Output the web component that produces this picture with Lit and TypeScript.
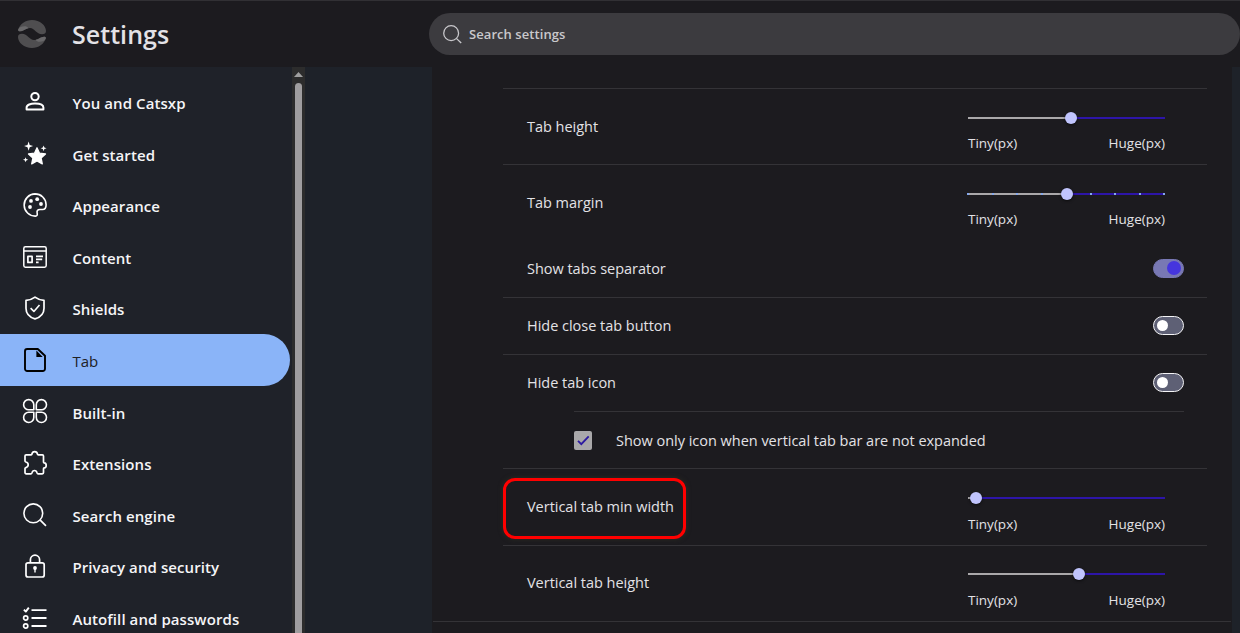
import { LitElement, html, css, svg, nothing } from "lit";
import { customElement, property } from "lit/decorators.js";
import { classMap } from "lit/directives/class-map.js";
import { styleMap } from "lit/directives/style-map.js";

const icons: Record<string, unknown> = {
  person: svg`<circle cx="12" cy="6.600" r="3.700" stroke-width="2"/><path d="M3.600 19.400v-1.900c0-2.700 4-4 8.400-4s8.400 1.300 8.400 4v1.900z" stroke-width="2"/>`,
  stars: svg`<path class="fill" d="M14 6.800l2.500 5.400 6 .7-4.400 4 1.200 6-5.300-3-5.300 3 1.200-6-4.400-4 6-.7z" stroke-width="1.300"/><path class="solid" d="M5.600 .6l1.100 3.300 3.400 1.200-3.400 1.200-1.100 3.400-1.100-3.400-3.400-1.200 3.400-1.200zM20.600 4.400l.8 2.100 2.200.8-2.200.8-.8 2.200-.8-2.200-2.200-.8 2.200-.8zM2.600 16.200l.7 1.800 1.900.7-1.900.7-.7 1.900-.7-1.900-1.900-.7 1.900-.7z"/>`,
  palette: svg`<path d="M12 .9A11.100 11.100 0 1 0 12.500 23.100c1.500 0 2-1.100 1.700-2.600-.6-2.500.3-4 2.800-4h2.500c2.300 0 3.600-1.700 3.600-4.700C23 5.500 18 .9 12 .9z" stroke-width="1.600"/><g class="solid"><circle cx="8" cy="7.900" r="1.900"/><circle cx="14.200" cy="6.200" r="1.900"/><circle cx="18" cy="11" r="1.900"/><circle cx="7" cy="14" r="1.900"/></g>`,
  content: svg`<rect x=".8" y="1.800" width="22.400" height="20.400" rx="1.600" stroke-width="1.500"/><path d="M1 6h22M13 11.400h7M13 14.400h6.200M13 17.400h2.600" stroke-width="1.600"/><rect x="4.900" y="11.400" width="4.200" height="6" stroke-width="1.700"/>`,
  shield: svg`<path d="M12 1.100c2.500 1.900 5.500 3 9 3.300v7.800c0 5.300-3.500 9-9 10.700-5.500-1.700-9-5.400-9-10.700V4.400c3.500-.3 6.500-1.400 9-3.300z" stroke-width="1.700"/><path d="M7.600 12.100l3.300 3.300 5.600-6.500" stroke-width="1.600"/>`,
  page: svg`<path d="M4.200 1h10.600L22 7.800V20.800a2.200 2.200 0 0 1-2.200 2.200H4.200A2.200 2.200 0 0 1 2 20.800V3.200A2.200 2.200 0 0 1 4.200 1z" stroke-width="1.900"/><path class="solid" d="M13.400 2.600l6.300 6.400h-6.300z"/>`,
  clover: svg`<path d="M10.800 10.800H6A5.100 5.100 0 1 1 10.800 5.800zM13.300 10.800V5.800A5.100 5.100 0 1 1 18.200 10.800zM10.800 13.300v5A5.100 5.100 0 1 1 6 13.300zM13.300 13.300h4.900a5.100 5.100 0 1 1-4.900 5z" stroke-width="1.600"/>`,
  puzzle: svg`<path d="M3.200 3.800h4.900c.5 0 .8-.3.900-.8.200-1.400 1.400-2.300 2.700-2.300s2.500.9 2.700 2.300c.1.500.4.800.9.800h4a1.200 1.200 0 0 1 1.200 1.200v6c0 .5.300.8.800.9 1.200.2 1.900 1.200 1.900 2.500s-.7 2.300-1.900 2.500c-.5.100-.8.400-.8.900v3.800a1.200 1.200 0 0 1-1.200 1.200h-4.200c-.6 0-.8-.3-1-.9-.4-1.500-1.300-2.400-2.600-2.400s-2.200.9-2.600 2.400c-.2.600-.4.900-1 .9H3.200A1.200 1.200 0 0 1 2 21.600v-4c0-.6.3-.8.900-1 1.500-.4 2.300-1.300 2.300-2.800s-.8-2.400-2.300-2.800c-.6-.2-.9-.4-.9-1V5a1.200 1.200 0 0 1 1.200-1.200z" stroke-width="1.700"/>`,
  search: svg`<circle cx="10.300" cy="10.300" r="9.400" stroke-width="1.600"/><path d="M17.200 17.200l5.800 5.600" stroke-width="1.700"/>`,
  lock: svg`<rect x="3" y="8.800" width="18.200" height="14.200" rx="2" stroke-width="1.700"/><path d="M7.400 8.600V5.800a4.600 4.600 0 0 1 9.200 0v2.800" stroke-width="1.700"/><circle class="solid" cx="12" cy="14" r="1.900"/><path d="M12 14v4.500" stroke-width="1.400"/>`,
  checklist: svg`<path d="M.9 3.600l1.900 2 3-3.900" stroke-width="1.900"/><circle cx="2.700" cy="12" r="2.100" stroke-width="1.700"/><circle cx="2.700" cy="20" r="2.100" stroke-width="1.700"/><path d="M8.500 4.200H23.500M8.500 12H23.500M8.500 20H23.500" stroke-width="1.800"/>`,
};

@customElement("app-icon")
class AppIcon extends LitElement {
  @property() name = "";
  static styles = css`
    :host { display: block; }
    svg { display: block; width: 100%; height: 100%; fill: none; stroke: currentColor; stroke-linejoin: round; overflow: visible; }
    .solid { fill: currentColor; stroke: none; }
    .fill { fill: currentColor; }
  `;
  render() {
    return html`<svg viewBox="0 0 24 24">${icons[this.name]}</svg>`;
  }
}

@customElement("range-slider")
class RangeSlider extends LitElement {
  @property({ type: Number }) value = 50;
  @property({ type: Number }) ticks = 0;
  static styles = css`
    :host { display: block; width: 197px; }
    .track { position: relative; height: 2px; background: #2d15a8; }
    .done { height: 2px; background: #aaa8aa; }
    .thumb { position: absolute; top: -5px; width: 12px; height: 12px; margin-left: -6px; border-radius: 50%; background: #c0c4fd; box-shadow: 0 1px 3px #0009; }
    .ticks { position: absolute; inset: 0 0 0 -1px; display: flex; justify-content: space-between; }
    .tick { width: 2px; height: 2px; background: #86a9ee; }
    .labels { display: flex; justify-content: space-between; margin-top: var(--label-gap, 15px); font-size: 13.500px; line-height: 18px; }
  `;
  render() {
    return html`
      <div class="track">
        <div class="done" style=${styleMap({ width: `${this.value}%` })}></div>
        ${this.ticks
          ? html`<div class="ticks">${Array.from({ length: this.ticks }, () => html`<div class="tick"></div>`)}</div>`
          : nothing}
        <div class="thumb" style=${styleMap({ left: `${this.value}%` })}></div>
      </div>
      <div class="labels"><span>Tiny(px)</span><span>Huge(px)</span></div>
    `;
  }
}

@customElement("toggle-switch")
class ToggleSwitch extends LitElement {
  @property({ type: Boolean }) on = false;
  static styles = css`
    :host { display: block; }
    .switch { box-sizing: border-box; width: 31px; height: 19px; border-radius: 10px; border: 1px solid #f4f4f6; background: #5e6075; display: flex; align-items: center; padding: 0 3px; }
    .knob { width: 11px; height: 11px; border-radius: 50%; background: #fff; }
    .on { background: #7878b4; border-color: #7878b4; justify-content: flex-end; padding: 0 2px 1px; }
    .on .knob { width: 14px; height: 14px; background: #4535de; }
  `;
  render() {
    return html`<div class=${classMap({ switch: true, on: this.on })}><div class="knob"></div></div>`;
  }
}

const nav: [string, string][] = [
  ["person", "You and Catsxp"],
  ["stars", "Get started"],
  ["palette", "Appearance"],
  ["content", "Content"],
  ["shield", "Shields"],
  ["page", "Tab"],
  ["clover", "Built-in"],
  ["puzzle", "Extensions"],
  ["search", "Search engine"],
  ["lock", "Privacy and security"],
  ["checklist", "Autofill and passwords"],
];

@customElement("app-root")
class AppRoot extends LitElement {
  static styles = css`
    :host { display: flex; flex-direction: column; box-sizing: border-box; width: 100%; height: 633px; overflow: hidden; background: #1c1b1f; color: #e3e2e6; font-family: "Open Sans", "Noto Sans", sans-serif; border-top: 1px solid #313034; }
    .header { flex: none; display: flex; align-items: center; height: 66px; padding-left: 18px; }
    .logo { width: 28px; height: 28px; }
    .title { width: 357px; margin: 0 0 0 26px; font-size: 25px; line-height: 34px; font-weight: 600; letter-spacing: 0.050px; }
    .searchbar { flex: 1; display: flex; align-items: center; height: 42px; border-radius: 21px; background: #3c3b3f; color: #c9c8cc; font-size: 13px; font-weight: 600; letter-spacing: 0.070px; }
    .searchicon { width: 19px; height: 19px; margin: 0 7px 0 14px; }
    .body { flex: 1; display: flex; min-height: 0; background: #1e2229; }
    .nav { width: 292px; flex: none; padding-top: 9px; box-sizing: border-box; background: #1f2229; overflow: hidden; }
    .item { display: flex; align-items: center; height: 51.6px; width: 290px; border-radius: 0 26px 26px 0; color: #f5f5f7; font-size: 15px; font-weight: 650; letter-spacing: 0.080px; }
    .item.active { background: #8ab4f8; color: #202124; font-weight: 400; letter-spacing: 0; }
    .navicon { width: 24px; height: 24px; margin: 0 25.500px 0 23px; color: #fff; }
    .active .navicon { color: #000; }
    .label { padding-top: 2.400px; }
    .scroll { width: 13px; flex: none; background: #2c2c2c; display: flex; flex-direction: column; align-items: center; }
    .arrow { width: 9px; height: 5px; margin: 5px 0 6px; background: #9f9f9f; clip-path: polygon(50% 0, 100% 100%, 0 100%); }
    .thumb { flex: 1; width: 7px; background: #9f9d9f; border-radius: 4px 4px 0 0; }
    .panel { width: 800px; flex: none; margin-left: 127px; background: #1c1b1f; box-sizing: border-box; padding-top: 21px; }
    .rows { margin: 0 25px 0 71px; }
    .row { box-sizing: border-box; display: flex; justify-content: space-between; align-items: center; height: 57px; padding: 0 23px 2px 24px; border-top: 1px solid #343337; font-size: 14.500px; letter-spacing: -0.020px; }
    .row.tall { height: 76px; padding: 0 42px 0 24px; }
    .row.tall range-slider { padding-top: 16px; letter-spacing: 0; }
    .row.taller { height: 77px; padding-bottom: 2px; }
    .row.low { --label-gap: 16px; }
    .row.low range-slider { margin-bottom: -1px; }
    .row.last { padding-bottom: 2px; }
    .row.plain { border-top-color: transparent; }
    .row.sub { margin: 0 23px 0 71px; padding: 0; justify-content: flex-start; gap: 24px; }
    .check { width: 18px; height: 19px; border-radius: 2px; background: #a9a8aa; display: block; }
    .end { border-top: 1px solid #343337; margin: 0 1px; }
    .mark { position: relative; }
    .mark::after { content: ""; position: absolute; left: -24px; top: -18.500px; width: 177px; height: 55px; border: 3px solid #f00; border-radius: 12px; box-shadow: 0 0 5px #2b2d22; }
  `;
  private slider(label: string, value: number, extra: Record<string, boolean> = {}, ticks = 0) {
    return html`<div class=${classMap({ row: true, tall: true, ...extra })}>
      <span class=${classMap({ mark: !!extra.taller })}>${label}</span>
      <range-slider .value=${value} .ticks=${ticks}></range-slider>
    </div>`;
  }
  private toggle(label: string, on: boolean, plain = false) {
    return html`<div class=${classMap({ row: true, plain })}><span>${label}</span><toggle-switch .on=${on}></toggle-switch></div>`;
  }
  render() {
    return html`
      <div class="header">
        <svg class="logo" viewBox="0 0 28 28">
          <path fill="#4f4e50" d="M.2 9.500C2 4 7.500 0 14 0c8 0 14 5.500 14 11 0 2.200-1.500 3.300-4 3.300-5.500 0-7.500-6.300-12-6.300-4 0-6.500 3.300-10 3.300C.6 11.300-.1 10.600.2 9.500z"/>
          <path fill="#69686a" d="M.2 9.500C1.200 7.200 3.500 6.200 6.500 6.200c1.800 0 3 .6 3.800 2C7.300 8.700 5 11.300 2 11.300 .6 11.300-.1 10.600.2 9.500z"/>
          <path fill="#4f4e50" d="M27.800 18.500C26 24 20.500 28 14 28 6 28 0 22.500 0 17c0-2.200 1.500-3.300 4-3.300 5.500 0 7.500 6.300 12 6.300 4 0 6.500-3.300 10-3.300 1.400 0 2.100.7 1.800 1.800z"/>
          <path fill="#69686a" d="M27.800 18.500c-1 2.300-3.300 3.300-6.300 3.300-1.800 0-3-.6-3.800-2 3-.5 5.300-3.100 8.300-3.100 1.400 0 2.100.7 1.800 1.800z"/>
        </svg>
        <h1 class="title">Settings</h1>
        <div class="searchbar"><app-icon class="searchicon" name="search"></app-icon><span>Search settings</span></div>
      </div>
      <div class="body">
        <nav class="nav">
          ${nav.map(([icon, label]) => html`<div class=${classMap({ item: true, active: label === "Tab" })}>
            <app-icon class="navicon" name=${icon}></app-icon><span class="label">${label}</span>
          </div>`)}
        </nav>
        <div class="scroll"><div class="arrow"></div><div class="thumb"></div></div>
        <main class="panel">
          <div class="rows">
            ${this.slider("Tab height", 52.3)}
            ${this.slider("Tab margin", 50, {}, 9)}
            ${this.toggle("Show tabs separator", true, true)}
            ${this.toggle("Hide close tab button", false)}
            ${this.toggle("Hide tab icon", false)}
            <div class="row sub">
              <svg class="check" viewBox="0 0 18 19"><path d="M4 9.900l3.300 3.200 7.400-7.700" fill="none" stroke="#2d1aa0" stroke-width="1.900"/></svg>
              <span>Show only icon when vertical tab bar are not expanded</span>
            </div>
            ${this.slider("Vertical tab min width", 4.3, { taller: true, low: true })}
            ${this.slider("Vertical tab height", 56.3, { last: true, low: true })}
          </div>
          <div class="end"></div>
        </main>
      </div>
    `;
  }
}
